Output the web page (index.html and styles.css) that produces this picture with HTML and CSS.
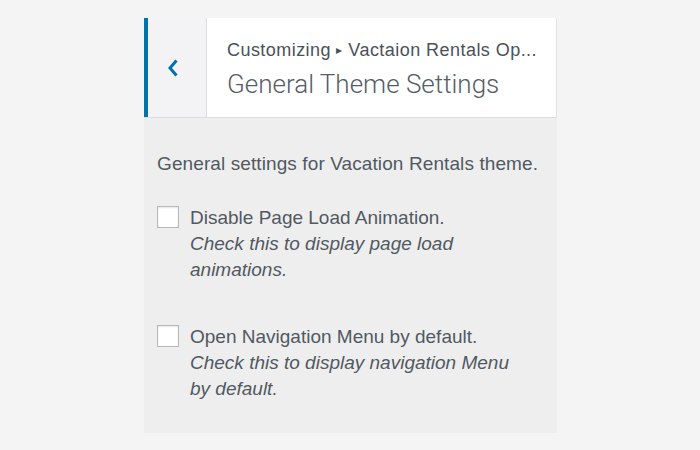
FILE: index.html
```html
<!DOCTYPE html>
<html lang="en">
<head>
<meta charset="utf-8">
<title>General Theme Settings</title>
<link rel="stylesheet" href="styles.css">
</head>
<body>
<div class="panel">
  <div class="panel-head">
    <button class="back" type="button" aria-label="Back">
      <svg width="14" height="20" viewBox="0 0 14 20"><polyline points="10.5,2.5 4,10 10.5,17.5" fill="none" stroke="#0073aa" stroke-width="3"/></svg>
    </button>
    <div class="titles">
      <div class="crumb">Customizing <span class="arrow">▸</span> Vactaion Rentals Op...</div>
      <h1 class="title">General Theme Settings</h1>
    </div>
  </div>
  <div class="panel-body">
    <p class="desc">General settings for Vacation Rentals theme.</p>
    <label class="option">
      <input type="checkbox" class="check">
      <span class="option-text">
        <span class="option-label">Disable Page Load Animation.</span>
        <span class="option-help">Check this to display page load animations.</span>
      </span>
    </label>
    <label class="option">
      <input type="checkbox" class="check">
      <span class="option-text">
        <span class="option-label">Open Navigation Menu by default.</span>
        <span class="option-help">Check this to display navigation Menu by default.</span>
      </span>
    </label>
  </div>
</div>
</body>
</html>
```
FILE: styles.css
```css
html, body {
  margin: 0;
  padding: 0;
}
body {
  background: #f4f4f4;
  font-family: "Liberation Sans", Arial, sans-serif;
  color: #515962;
  padding: 18px 0 0 144px;
}
.panel {
  width: 413px;
  background: #eeeeee;
}
.panel-head {
  display: flex;
  height: 99px;
  background: #fff;
  border-bottom: 1px solid #dddddd;
  border-right: 1px solid #e2e2e2;
}
.back {
  width: 63px;
  flex: 0 0 63px;
  box-sizing: border-box;
  border: 0;
  border-left: 4px solid #0073aa;
  border-right: 1px solid #dddddd;
  background: #f3f3f5;
  padding: 0 8px 0 0;
  margin: 0;
  display: flex;
  align-items: center;
  justify-content: center;
}
.back svg {
  display: block;
}
.titles {
  padding: 20px 0 0 20px;
  min-width: 0;
}
.crumb {
  font-size: 18px;
  line-height: 24px;
  letter-spacing: 0.45px;
  color: #4a5159;
  white-space: nowrap;
}
.arrow {
  font-size: 12px;
  vertical-align: 2px;
}
.title {
  margin: 5px 0 0;
  font-family: Roboto, "Liberation Sans", sans-serif;
  font-weight: 300;
  font-size: 26px;
  line-height: 34px;
  color: #555d66;
  white-space: nowrap;
}
.panel-body {
  padding: 33px 14px 31px 13px;
}
.desc {
  margin: 0 0 29px;
  font-size: 19px;
  line-height: 25px;
  letter-spacing: 0.1px;
}
.option {
  display: flex;
  align-items: flex-start;
  gap: 11px;
  margin-bottom: 41px;
}
.option:last-child {
  margin-bottom: 0;
}
.check {
  appearance: none;
  -webkit-appearance: none;
  margin: 1px 0 0 0;
  width: 22px;
  height: 22px;
  flex: 0 0 22px;
  box-sizing: border-box;
  background: #fff;
  border: 1px solid #b4b9be;
  box-shadow: inset 0 1px 2px rgba(0, 0, 0, 0.1);
}
.option-text {
  display: flex;
  flex-direction: column;
  font-size: 19px;
  line-height: 26px;
  padding-right: 18px;
}
.option-help {
  font-style: italic;
}
```
